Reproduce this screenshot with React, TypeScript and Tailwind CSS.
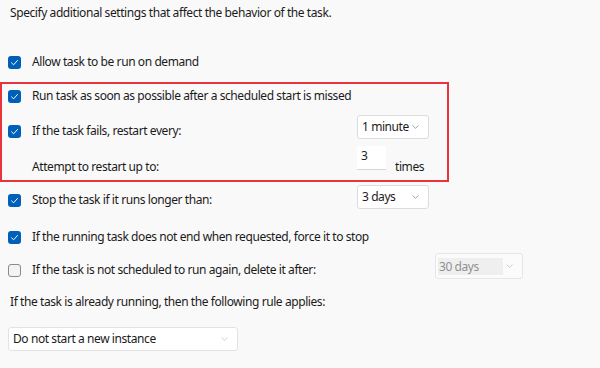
import React from "react";

function Check({ checked = true }: { checked?: boolean }) {
  if (!checked) {
    return (
      <span className="block w-[13px] h-[13px] shrink-0 rounded-[3px] border border-[#8a8a8a] bg-[#f3f3f3]" />
    );
  }
  return (
    <svg width="13" height="13" viewBox="0 0 13 13" className="shrink-0 block">
      <rect x="0" y="0" width="13" height="13" rx="3" fill="#005fb8" />
      <path d="M3.6 6.9 L5.6 8.8 L9.5 4.5" fill="none" stroke="#ffffff" strokeWidth="1" strokeLinecap="round" strokeLinejoin="round" />
    </svg>
  );
}

function Chevron({ light = false }: { light?: boolean }) {
  return (
    <svg width="7" height="4" viewBox="0 0 7 4" className="block shrink-0">
      <path d="M0.5 0.5 L3.5 3.3 L6.5 0.5" fill="none" stroke={light ? "#c8c8c8" : "#9a9a9a"} strokeWidth="0.9" />
    </svg>
  );
}

function Combo({ value, w, disabled = false }: { value: string; w: string; disabled?: boolean }) {
  return (
    <div
      className={
        disabled
          ? "flex items-center h-[26px] w-[88px] rounded-[3px] border border-[#e6e6e6] bg-[#fbfbfb] pl-[2px] pr-[9px]"
          : `flex items-center h-[24px] ${w} rounded-[3px] border border-[#dcdcdc] bg-white pl-[4px] pr-[9px]`
      }
    >
      {disabled ? (
        <span className="h-[17px] w-[65px] bg-[#efefef] pl-[1px] leading-[17px] text-[#8f8f8f] whitespace-nowrap">{value}</span>
      ) : (
        <span className="leading-none whitespace-nowrap">{value}</span>
      )}
      <span className="ml-auto">
        <Chevron light={disabled} />
      </span>
    </div>
  );
}

function Row({
  h,
  checked,
  label,
  labelW = "w-[325px]",
  children,
  noBox = false,
}: {
  h: string;
  checked?: boolean;
  label: string;
  labelW?: string;
  children?: React.ReactNode;
  noBox?: boolean;
}) {
  return (
    <div className={`flex items-center ${h} pl-[8px]`}>
      {noBox ? <span className="w-[13px] shrink-0" /> : <Check checked={checked} />}
      <span className={`ml-[11px] ${labelW} shrink-0 whitespace-nowrap`}>{label}</span>
      {children}
    </div>
  );
}

export default function App() {
  return (
    <div
      className="w-[600px] h-[368px] overflow-hidden bg-[#f9f9f9] text-[12px] tracking-[-0.42px] text-[#1b1b1b]"
      style={{ fontFamily: '"Segoe UI", "Noto Sans", "Open Sans", sans-serif' }}
    >
      <div className="h-[26px] flex items-center pl-[10px]">
        Specify additional settings that affect the behavior of the task.
      </div>

      <div className="mt-[19px]">
        <Row h="h-[34px]" checked label="Allow task to be run on demand" />
      </div>

      {/* highlighted group */}
      <div className="mt-[3px] w-[449px] border-2 border-[#e8343c]">
        <div className="-ml-[2px]">
          <Row h="h-[24px]" checked label="Run task as soon as possible after a scheduled start is missed" />
          <Row h="h-[46px]" checked label="If the task fails, restart every:">
            <div className="mb-[8px]">
              <Combo value="1 minute" w="w-[72px]" />
            </div>
          </Row>
          <Row h="h-[26px]" noBox label="Attempt to restart up to:">
            <div className="mb-[13px] flex items-start">
              <div className="h-[23px] w-[29px] bg-white shadow-[0_1px_0_#d6d6d6] pl-[4px] pt-[2px] leading-[16px]">3</div>
              <span className="ml-[9px] mt-[13px] leading-[16px]">times</span>
            </div>
          </Row>
        </div>
      </div>

      <Row h="h-[36px]" checked label="Stop the task if it runs longer than:">
        <div className="mb-[6px]">
          <Combo value="3 days" w="w-[72px]" />
        </div>
      </Row>
      <Row h="h-[38px]" checked label="If the running task does not end when requested, force it to stop" />
      <Row
        h="h-[28px]"
        checked={false}
        label="If the task is not scheduled to run again, delete it after:"
        labelW="w-[403px]"
      >
        <div className="mb-[8px]">
          <Combo value="30 days" w="w-[88px]" disabled />
        </div>
      </Row>

      <div className="h-[36px] flex items-center pl-[10px]">
        If the task is already running, then the following rule applies:
      </div>

      <div className="mt-[7px] ml-[8px] flex items-center h-[24px] w-[230px] rounded-[3px] border border-[#e3e3e3] bg-white pl-[4px] pr-[9px]">
        <span>Do not start a new instance</span>
        <span className="ml-auto">
          <Chevron light />
        </span>
      </div>
    </div>
  );
}
